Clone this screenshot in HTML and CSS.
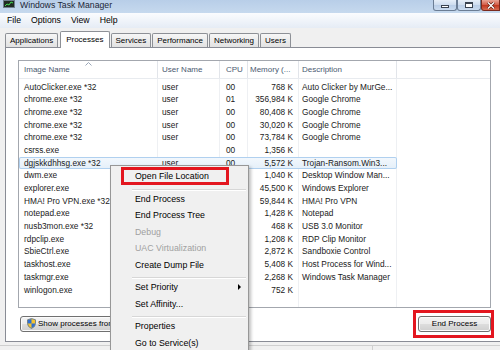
FILE: index.html
```html
<!DOCTYPE html>
<html lang="en">
<head>
    <meta charset="UTF-8">
    <meta name="viewport" content="width=device-width, initial-scale=1.0">
    <title>Windows Task Manager</title>
    <link rel="stylesheet" href="styles.css">
</head>
<body>

    <div class="window">
        <div class="titlebar">
            <svg class="app-icon" width="12" height="9" viewBox="0 0 12 9">
                <rect x="0.5" y="0.5" width="11" height="7" fill="#1f2b22" stroke="#6f7f8f"/>
                <polyline points="2,6 4,4 6,5 8,2 10,3" fill="none" stroke="#44dd55" stroke-width="1"/>
            </svg>
            <span class="title">Windows Task Manager</span>
            <div class="caption-buttons">
                <span class="cap-btn cap-min"><i></i></span>
                <span class="cap-btn cap-max"><i></i></span>
                <span class="cap-btn cap-close">
                    <svg width="8" height="7" viewBox="0 0 8 7">
                        <path d="M1 0.5 L7 6.5 M7 0.5 L1 6.5" stroke="#5a1a10" stroke-width="2.6"/>
                        <path d="M1 0.5 L7 6.5 M7 0.5 L1 6.5" stroke="#fff" stroke-width="1.4"/>
                    </svg>
                </span>
            </div>
        </div>

        <div class="menubar">
            <span>File</span>
            <span>Options</span>
            <span>View</span>
            <span>Help</span>
        </div>

        <div class="tabs">
            <div class="tab">Applications</div>
            <div class="tab active">Processes</div>
            <div class="tab">Services</div>
            <div class="tab">Performance</div>
            <div class="tab">Networking</div>
            <div class="tab">Users</div>
        </div>

        <div class="panel">
            <div class="list">
                <div class="list-head">
                    <div class="head-cell">Image Name
                        <svg class="sort-arrow" width="7" height="4" viewBox="0 0 7 4">
                            <path d="M0.5 3.5 L3.5 0.5 L6.5 3.5" fill="none" stroke="#9aa7b8" stroke-width="1"/>
                        </svg>
                    </div>
                    <div class="head-cell">User Name</div>
                    <div class="head-cell">CPU</div>
                    <div class="head-cell">Memory (...</div>
                    <div class="head-cell">Description</div>
                    <div class="head-cell filler"></div>
                </div>
                <!-- rows below the right-click menu keep their user/cpu cells empty, they are covered anyway -->
                <div class="list-body">
                    <div class="row"><span>AutoClicker.exe *32</span><span>user</span><span>00</span><span>768 K</span><span>Auto Clicker by MurGe...</span></div>
                    <div class="row"><span>chrome.exe *32</span><span>user</span><span>01</span><span>356,984 K</span><span>Google Chrome</span></div>
                    <div class="row"><span>chrome.exe *32</span><span>user</span><span>00</span><span>80,408 K</span><span>Google Chrome</span></div>
                    <div class="row"><span>chrome.exe *32</span><span>user</span><span>00</span><span>30,020 K</span><span>Google Chrome</span></div>
                    <div class="row"><span>chrome.exe *32</span><span>user</span><span>00</span><span>73,784 K</span><span>Google Chrome</span></div>
                    <div class="row"><span>csrss.exe</span><span></span><span>00</span><span>1,356 K</span><span></span></div>
                    <div class="row selected"><span>dgjskkdhhsg.exe *32</span><span>user</span><span>00</span><span>5,572 K</span><span>Trojan-Ransom.Win3...</span></div>
                    <div class="row"><span>dwm.exe</span><span></span><span></span><span>1,040 K</span><span>Desktop Window Man...</span></div>
                    <div class="row"><span>explorer.exe</span><span></span><span></span><span>45,500 K</span><span>Windows Explorer</span></div>
                    <div class="row"><span>HMA! Pro VPN.exe *32</span><span></span><span></span><span>59,844 K</span><span>HMA! Pro VPN</span></div>
                    <div class="row"><span>notepad.exe</span><span></span><span></span><span>1,428 K</span><span>Notepad</span></div>
                    <div class="row"><span>nusb3mon.exe *32</span><span></span><span></span><span>468 K</span><span>USB 3.0 Monitor</span></div>
                    <div class="row"><span>rdpclip.exe</span><span></span><span></span><span>1,208 K</span><span>RDP Clip Monitor</span></div>
                    <div class="row"><span>SbieCtrl.exe</span><span></span><span></span><span>2,872 K</span><span>Sandboxie Control</span></div>
                    <div class="row"><span>taskhost.exe</span><span></span><span></span><span>5,408 K</span><span>Host Process for Wind...</span></div>
                    <div class="row"><span>taskmgr.exe</span><span></span><span></span><span>2,268 K</span><span>Windows Task Manager</span></div>
                    <div class="row"><span>winlogon.exe</span><span></span><span></span><span>752 K</span><span></span></div>
                </div>
            </div>

            <div class="actions">
                <button class="btn btn-show">
                    <svg class="shield" width="9" height="11" viewBox="0 0 9 11">
                        <path d="M4.5 0.5 L8.5 1.8 L8.5 5.5 Q8.5 8.8 4.5 10.5 Q0.5 8.8 0.5 5.5 L0.5 1.8 Z" fill="#f4c430" stroke="#5a6f8a" stroke-width="0.8"/>
                        <path d="M4.5 0.9 L4.5 5.5 L0.9 5.5 L0.9 2.1 Z" fill="#2f6fd0"/>
                        <path d="M4.5 5.5 L8.1 5.5 Q8.1 8.5 4.5 10.1 Z" fill="#2f6fd0"/>
                    </svg>
                    Show processes from all users
                </button>
                <div class="callout-box">
                    <button class="btn btn-end">End Process</button>
                </div>
            </div>
        </div>

        <div class="statusbar">
            <div class="status-cell"></div>
        </div>
    </div>

    <div class="context-menu">
        <div class="menu-item marked"><span class="callout">Open File Location</span></div>
        <div class="menu-sep"></div>
        <div class="menu-item">End Process</div>
        <div class="menu-item">End Process Tree</div>
        <div class="menu-item disabled">Debug</div>
        <div class="menu-item disabled">UAC Virtualization</div>
        <div class="menu-item">Create Dump File</div>
        <div class="menu-sep"></div>
        <div class="menu-item">Set Priority<span class="sub-arrow"></span></div>
        <div class="menu-item">Set Affinity...</div>
        <div class="menu-sep"></div>
        <div class="menu-item">Properties</div>
        <div class="menu-item">Go to Service(s)</div>
    </div>

</body>
</html>
```

FILE: styles.css
```css
* {
    box-sizing: border-box;
}
body {
    margin: 0;
    width: 500px;
    height: 350px;
    overflow: hidden;
    position: relative;
    background-color: #f0f0f0;
    font-family: "Liberation Sans", Arial, sans-serif;
    color: #000;
}
.window {
    width: 500px;
}

/* title bar */
.titlebar {
    height: 13px;
    display: flex;
    align-items: flex-start;
    background: linear-gradient(#b8cee8, #c6d9ee);
}
.app-icon {
    margin: 0 5px 0 3px;
}
.title {
    font-size: 8.7px;
    line-height: 11px;
    color: #1b2636;
}
.caption-buttons {
    display: flex;
    margin-left: auto;
}
.cap-btn {
    width: 24px;
    height: 11px;
    display: flex;
    align-items: center;
    justify-content: center;
    border: 1px solid #6b7d94;
    border-top: none;
    border-radius: 0 0 3px 3px;
    background: linear-gradient(#e6eef8, #cddcee 50%, #b9cde6 50%, #cbdcf0);
}
.cap-min i {
    width: 8px;
    height: 3px;
    margin-top: 3px;
    background: #fff;
    border: 1px solid #3a4350;
}
.cap-max i {
    width: 8px;
    height: 6px;
    background: #fff;
    border: 1px solid #3a4350;
    border-top-width: 2px;
}
.cap-close {
    width: 19px;
    border-color: #7a2a1e;
    border-radius: 0 0 0 3px;
    background: linear-gradient(#e9a597, #d25a45 50%, #c0341d 50%, #d66a50);
}

/* menu bar */
.menubar {
    height: 15px;
    display: flex;
    padding-left: 2px;
    font-size: 8.7px;
    line-height: 15px;
    background: linear-gradient(#fbfcfe, #e5ecf5);
}
.menubar span {
    padding: 0 5px;
}

/* tabs */
.tabs {
    height: 17px;
    margin-top: 3px;
    padding-left: 5px;
    display: flex;
    align-items: flex-end;
}
.tab {
    height: 14px;
    margin: 0 1px 1px 0;
    padding: 0 4px;
    border: 1px solid #8d9096;
    border-bottom: none;
    border-radius: 2px 2px 0 0;
    background: linear-gradient(#f6f6f6, #e2e2e2);
    font-size: 8px;
    line-height: 13px;
}
.tab.active {
    height: 17px;
    margin-bottom: 0;
    padding: 0 5px;
    background: #fff;
    position: relative;
    z-index: 1;
    line-height: 15px;
}
.tabs .tab:first-child {
    margin-right: 2px;
}

/* tab page */
.panel {
    margin: -1px 0 0 5px;
    width: 499px;
    height: 295px;
    padding: 12px 12px 0;
    border: 1px solid #898c95;
    background: #fff;
}
.list {
    height: 248px;
    border: 1px solid #a3a7ae;
    overflow: hidden;
}
.list-head {
    height: 18px;
    display: flex;
    border-bottom: 1px solid #e8ebef;
}
.head-cell {
    position: relative;
    flex: none;
    height: 17px;
    border-right: 1px solid #e2e5ea;
    font-size: 8px;
    line-height: 17px;
    color: #4a5a70;
    white-space: nowrap;
    overflow: hidden;
}
.head-cell:nth-child(1) { width: 139px; padding-left: 5px; }
.head-cell:nth-child(2) { width: 62px; padding-left: 4px; }
.head-cell:nth-child(3) { width: 28px; padding-left: 6px; }
.head-cell:nth-child(4) { width: 51px; padding-left: 2px; }
.head-cell:nth-child(5) { width: 98px; padding-left: 3px; }
.head-cell.filler {
    flex: 1;
    border-right: none;
}
.sort-arrow {
    position: absolute;
    top: 1px;
    left: 66px;
}
.list-body {
    height: 229px;
    padding-top: 1.5px;
    background: linear-gradient(to right,
        transparent 138px, #eef0f3 138px 139px,
        transparent 139px 200px, #eef0f3 200px 201px,
        transparent 201px 228px, #eef0f3 228px 229px,
        transparent 229px 279px, #eef0f3 279px 280px,
        transparent 280px 377px, #eef0f3 377px 378px,
        transparent 378px);
}
.row {
    width: 378px;
    height: 12.7px;
    display: grid;
    grid-template-columns: 139px 62px 28px 51px 98px;
    font-size: 8.3px;
    line-height: 12.7px;
    color: #1a1a1a;
    white-space: nowrap;
}
.row span {
    overflow: hidden;
}
.row span:nth-child(1) { padding-left: 5px; }
.row span:nth-child(2) { padding-left: 4px; }
.row span:nth-child(3) { padding-left: 6px; }
.row span:nth-child(4) { padding-right: 6px; text-align: right; }
.row span:nth-child(5) { padding-left: 3px; }
.row.selected {
    border-radius: 2px;
    background: linear-gradient(#f3f8fd, #e4eff9);
    box-shadow: inset 0 0 0 1px #b0d0ef;
}

/* buttons */
.actions {
    height: 27px;
    margin-top: 2px;
    display: flex;
    align-items: center;
    justify-content: space-between;
}
.btn {
    height: 16px;
    padding: 0;
    border: 1px solid #707070;
    border-radius: 3px;
    background: linear-gradient(#f3f3f3, #ebebeb 50%, #dddddd 50%, #cfcfcf);
    box-shadow: inset 0 0 0 1px #fbfbfb;
    font-family: "Liberation Sans", Arial, sans-serif;
    font-size: 8px;
    color: #000;
}
.btn-show {
    margin-left: 2px;
    padding: 0 8px 0 6px;
    display: flex;
    align-items: center;
    gap: 2px;
    white-space: nowrap;
}
.btn-end {
    width: 73px;
    display: block;
}
.callout-box {
    margin-right: -3px;
    padding: 3px 0 3px 2px;
    border: 3px solid #e3161f;
}

/* status bar */
.statusbar {
    height: 20px;
    margin-top: 3px;
    border-top: 1px solid #cfcfcf;
}
.status-cell {
    width: 373px;
    height: 100%;
    border-right: 1px solid #cfcfcf;
}

/* right click menu */
.context-menu {
    position: absolute;
    left: 110px;
    top: 165px;
    width: 139px;
    height: 200px;
    padding: 2px;
    border: 1px solid #979797;
    background: #f0f0f0;
    box-shadow: 2px 2px 3px rgba(0, 0, 0, 0.25);
    font-size: 8.8px;
}
.menu-item {
    height: 16.5px;
    padding-left: 22px;
    display: flex;
    align-items: center;
    white-space: nowrap;
}
.menu-item.disabled {
    color: #a0a0a0;
}
.menu-item.marked {
    padding-left: 8px;
}
.callout {
    flex: none;
    width: 108px;
    height: 18px;
    padding-left: 11px;
    border: 3px solid #e3161f;
    line-height: 12px;
}
.menu-sep {
    height: 6px;
    margin-left: 19px;
    padding-top: 4px;
}
.menu-sep::before {
    content: "";
    display: block;
    height: 1px;
    background: #d7d7d7;
    border-bottom: 1px solid #fff;
    box-sizing: content-box;
}
.sub-arrow {
    margin: 0 5px 0 auto;
    width: 0;
    height: 0;
    border-top: 3px solid transparent;
    border-bottom: 3px solid transparent;
    border-left: 3px solid #000;
}
```
